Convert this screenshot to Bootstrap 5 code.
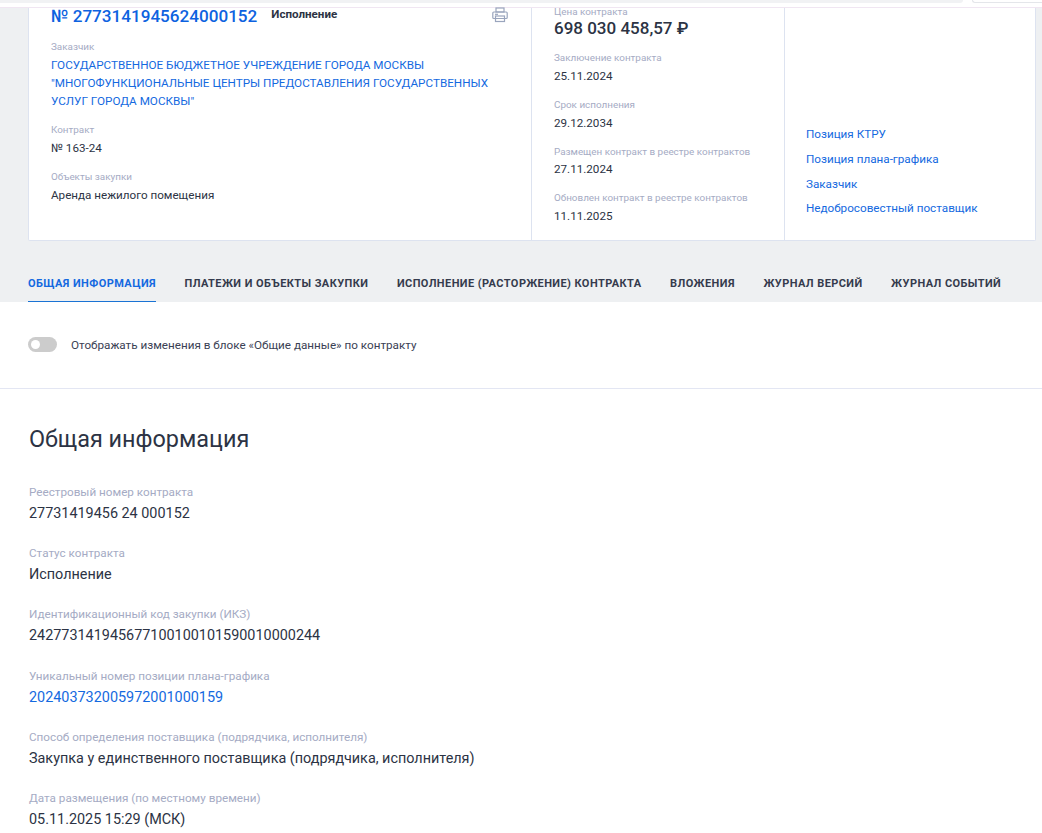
<!DOCTYPE html>
<html lang="ru">
<head>
<meta charset="utf-8">
<title>Контракт</title>
<link href="https://cdn.jsdelivr.net/npm/bootstrap@5.3.0/dist/css/bootstrap.min.css" rel="stylesheet">
<style>
html,body{height:833px;overflow:hidden}
body{font-family:Roboto,"Liberation Sans",sans-serif;color:#2c3344;background:#fff;font-size:12px}
.topline{height:8px;background:#fff;border-bottom:1px solid #f0e6f2;position:relative}
.topstrip{height:3px;width:963px;background:#f1f2f4;border-radius:0 0 6px 0}
.topother{position:absolute;left:972px;right:0;top:0;height:3px;border:1px solid #e4e6ea;border-width:0 0 1px 1px;border-radius:0 0 0 6px}
.graybox{background:#eef0f2;height:294px;padding:0 6px 0 28px}
.maincard{background:#fff;border:1px solid #dde3f0;border-top:0;border-radius:0 0 2px 2px;height:233px;display:flex}
.c1{width:503px;padding:0 22px;border-right:1px solid #dde3f0;position:relative}
.c2{width:253px;padding:0 22px;border-right:1px solid #dde3f0}
.c3{flex:1;padding:118px 21px 0;margin-top:-1px}
.regnum{font-size:17.1px;font-weight:500;color:#0d62e0;line-height:24px;white-space:nowrap;margin-top:-4px}
.stat{font-size:11.6px;font-weight:700;color:#2c3344;margin-left:14px;position:relative;top:-3px}
.printer{position:absolute;right:23px;top:-1px}
.lab{font-size:9.9px;color:#a5abc4;line-height:14px}
.val{font-size:11.65px;color:#2c3344;line-height:18px}
.lnk{font-size:11.7px;color:#1469e0;text-decoration:none}
.org{line-height:18px;display:block;margin-top:2px}
.price{font-size:17px;font-weight:500;line-height:20px;color:#2c3344}
.side{display:block;line-height:18px;margin-bottom:6.8px}
.tabbar{display:flex;gap:28.5px;height:62px}
.tabitem{font-size:11px;font-weight:700;letter-spacing:.42px;color:#353b4d;text-decoration:none;height:61px;line-height:85px;white-space:nowrap;display:block}
.tabitem.on{color:#1469e0;border-bottom:1px solid #1a73d4}
.togrow{height:87px;display:flex;align-items:center;padding-left:28px;border-bottom:1px solid #e3e6f3}
.tog{width:29px;height:15px;background:#ccc;border-radius:8px;position:relative;margin-right:14px;margin-top:-2px}
.tog::after{content:"";position:absolute;left:3px;top:3px;width:9px;height:9px;border-radius:50%;background:#fff}
.togtxt{font-size:11.7px;color:#3a4154;padding-top:1px}
.sect{padding:0 29px}
.h{font-size:23.4px;font-weight:400;color:#2c3344;line-height:30px;margin:35px 0 30px}
.flab{font-size:11.7px;color:#a5abc4;line-height:17px}
.fval{font-size:14.4px;color:#2c3344;line-height:20px;margin-bottom:21.2px;margin-top:3px}
.fval a{color:#1469e0;text-decoration:none}
.m-lab13{margin-top:13px}
</style>
</head>
<body>
<div class="topline"><div class="topstrip"></div><div class="topother"></div></div>
<div class="graybox">
  <div class="maincard">
    <div class="c1">
      <div class="d-flex align-items-center"><span class="regnum">№ 2773141945624000152</span><span class="stat">Исполнение</span></div>
      <svg class="printer" width="16" height="16" viewBox="0 0 16 16" fill="none" stroke="#9aa5bd" stroke-width="1.2"><rect x="4" y="1" width="8" height="4"/><rect x=".8" y="5" width="14.4" height="6.5" rx="1"/><rect x="3.5" y="9" width="9" height="5.5"/><path d="M3 7.3h3"/></svg>
      <div class="lab" style="margin-top:12px">Заказчик</div>
      <a class="lnk org" href="#">ГОСУДАРСТВЕННОЕ БЮДЖЕТНОЕ УЧРЕЖДЕНИЕ ГОРОДА МОСКВЫ<br>"МНОГОФУНКЦИОНАЛЬНЫЕ ЦЕНТРЫ ПРЕДОСТАВЛЕНИЯ ГОСУДАРСТВЕННЫХ<br>УСЛУГ ГОРОДА МОСКВЫ"</a>
      <div class="lab m-lab13">Контракт</div>
      <div class="val" style="margin-top:2px">№ 163-24</div>
      <div class="lab m-lab13">Объекты закупки</div>
      <div class="val" style="margin-top:2px">Аренда нежилого помещения</div>
    </div>
    <div class="c2">
      <div class="lab" style="margin-top:-3px">Цена контракта</div>
      <div class="price" style="margin-top:-1px">698 030 458,57 ₽</div>
      <div class="lab m-lab13">Заключение контракта</div>
      <div class="val" style="margin-top:2px">25.11.2024</div>
      <div class="lab m-lab13">Срок исполнения</div>
      <div class="val" style="margin-top:2px">29.12.2034</div>
      <div class="lab m-lab13">Размещен контракт в реестре контрактов</div>
      <div class="val" style="margin-top:1px">27.11.2024</div>
      <div class="lab m-lab13">Обновлен контракт в реестре контрактов</div>
      <div class="val" style="margin-top:2px">11.11.2025</div>
    </div>
    <div class="c3">
      <a class="lnk side" href="#">Позиция КТРУ</a>
      <a class="lnk side" href="#">Позиция плана-графика</a>
      <a class="lnk side" href="#">Заказчик</a>
      <a class="lnk side" href="#">Недобросовестный поставщик</a>
    </div>
  </div>
  <div class="tabbar">
    <a class="tabitem on" href="#">ОБЩАЯ ИНФОРМАЦИЯ</a>
    <a class="tabitem" href="#">ПЛАТЕЖИ И ОБЪЕКТЫ ЗАКУПКИ</a>
    <a class="tabitem" href="#">ИСПОЛНЕНИЕ (РАСТОРЖЕНИЕ) КОНТРАКТА</a>
    <a class="tabitem" href="#">ВЛОЖЕНИЯ</a>
    <a class="tabitem" href="#">ЖУРНАЛ ВЕРСИЙ</a>
    <a class="tabitem" href="#">ЖУРНАЛ СОБЫТИЙ</a>
  </div>
</div>
<div class="togrow"><span class="tog"></span><span class="togtxt">Отображать изменения в блоке «Общие данные» по контракту</span></div>
<div class="sect">
  <h2 class="h">Общая информация</h2>
  <div class="flab">Реестровый номер контракта</div><div class="fval">27731419456 24 000152</div>
  <div class="flab">Статус контракта</div><div class="fval">Исполнение</div>
  <div class="flab">Идентификационный код закупки (ИКЗ)</div><div class="fval">242773141945677100100101590010000244</div>
  <div class="flab">Уникальный номер позиции плана-графика</div><div class="fval"><a href="#">202403732005972001000159</a></div>
  <div class="flab">Способ определения поставщика (подрядчика, исполнителя)</div><div class="fval">Закупка у единственного поставщика (подрядчика, исполнителя)</div>
  <div class="flab">Дата размещения (по местному времени)</div><div class="fval">05.11.2025 15:29 (МСК)</div>
</div>
<script src="https://cdn.jsdelivr.net/npm/bootstrap@5.3.0/dist/js/bootstrap.bundle.min.js"></script>
</body>
</html>
